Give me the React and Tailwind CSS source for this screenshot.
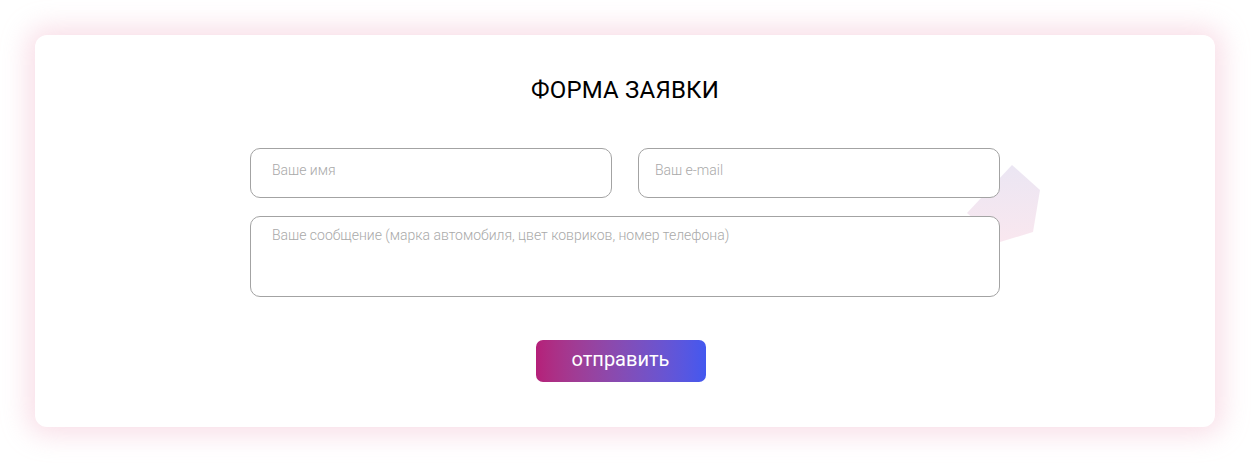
import React from "react";

const Pentagon = () => (
  <svg className="absolute left-[930px] top-[128px]" width="78" height="80" viewBox="0 0 78 80">
    <defs>
      <linearGradient id="pg" x1="0" y1="0" x2="0" y2="1">
        <stop offset="0" stopColor="#ebe6f3" />
        <stop offset="1" stopColor="#f9e7ef" />
      </linearGradient>
    </defs>
    <polygon points="47,2 75,27 68,69 35,79 2,50" fill="url(#pg)" />
  </svg>
);

export default function App() {
  return (
    <div className="min-h-[463px] w-full bg-white p-[35px] font-['Roboto',sans-serif]">
      <div className="relative h-[392px] w-[1180px] rounded-[12px] bg-white shadow-[0_0_26px_8px_rgba(240,170,195,0.38)]">
        <Pentagon />
        <div className="relative flex flex-col items-center pt-[41px]">
          <h1 className="text-[24px] leading-[28px] font-normal tracking-[0.2px] text-black">ФОРМА ЗАЯВКИ</h1>
          <form className="mt-[44px] flex w-[750px] flex-col gap-[18px]">
            <div className="flex gap-[26px]">
              <input
                type="text"
                placeholder="Ваше имя"
                className="h-[50px] w-[362px] rounded-[10px] border border-[#a3a3a3] bg-white px-[21px] pb-[6px] text-[14px] font-light text-[#555] outline-none placeholder:text-[#a9a9a9]"
              />
              <input
                type="email"
                placeholder="Ваш e-mail"
                className="h-[50px] w-[362px] rounded-[10px] border border-[#a3a3a3] bg-white px-[16px] pb-[6px] text-[14px] font-light text-[#555] outline-none placeholder:text-[#a9a9a9]"
              />
            </div>
            <textarea
              placeholder="Ваше сообщение (марка автомобиля, цвет ковриков, номер телефона)"
              className="h-[81px] w-[750px] resize-none rounded-[10px] border border-[#a3a3a3] bg-white px-[21px] pt-[9px] text-[14px] leading-[18px] font-light text-[#555] outline-none placeholder:text-[#a9a9a9]"
            />
            <div className="mt-[25px] flex justify-center pr-[9px]">
              <button
                type="button"
                className="h-[42px] w-[170px] rounded-[7px] bg-gradient-to-r from-[#b51f79] to-[#4358ef] pb-[4px] text-[20px] text-white"
              >
                отправить
              </button>
            </div>
          </form>
        </div>
      </div>
    </div>
  );
}
